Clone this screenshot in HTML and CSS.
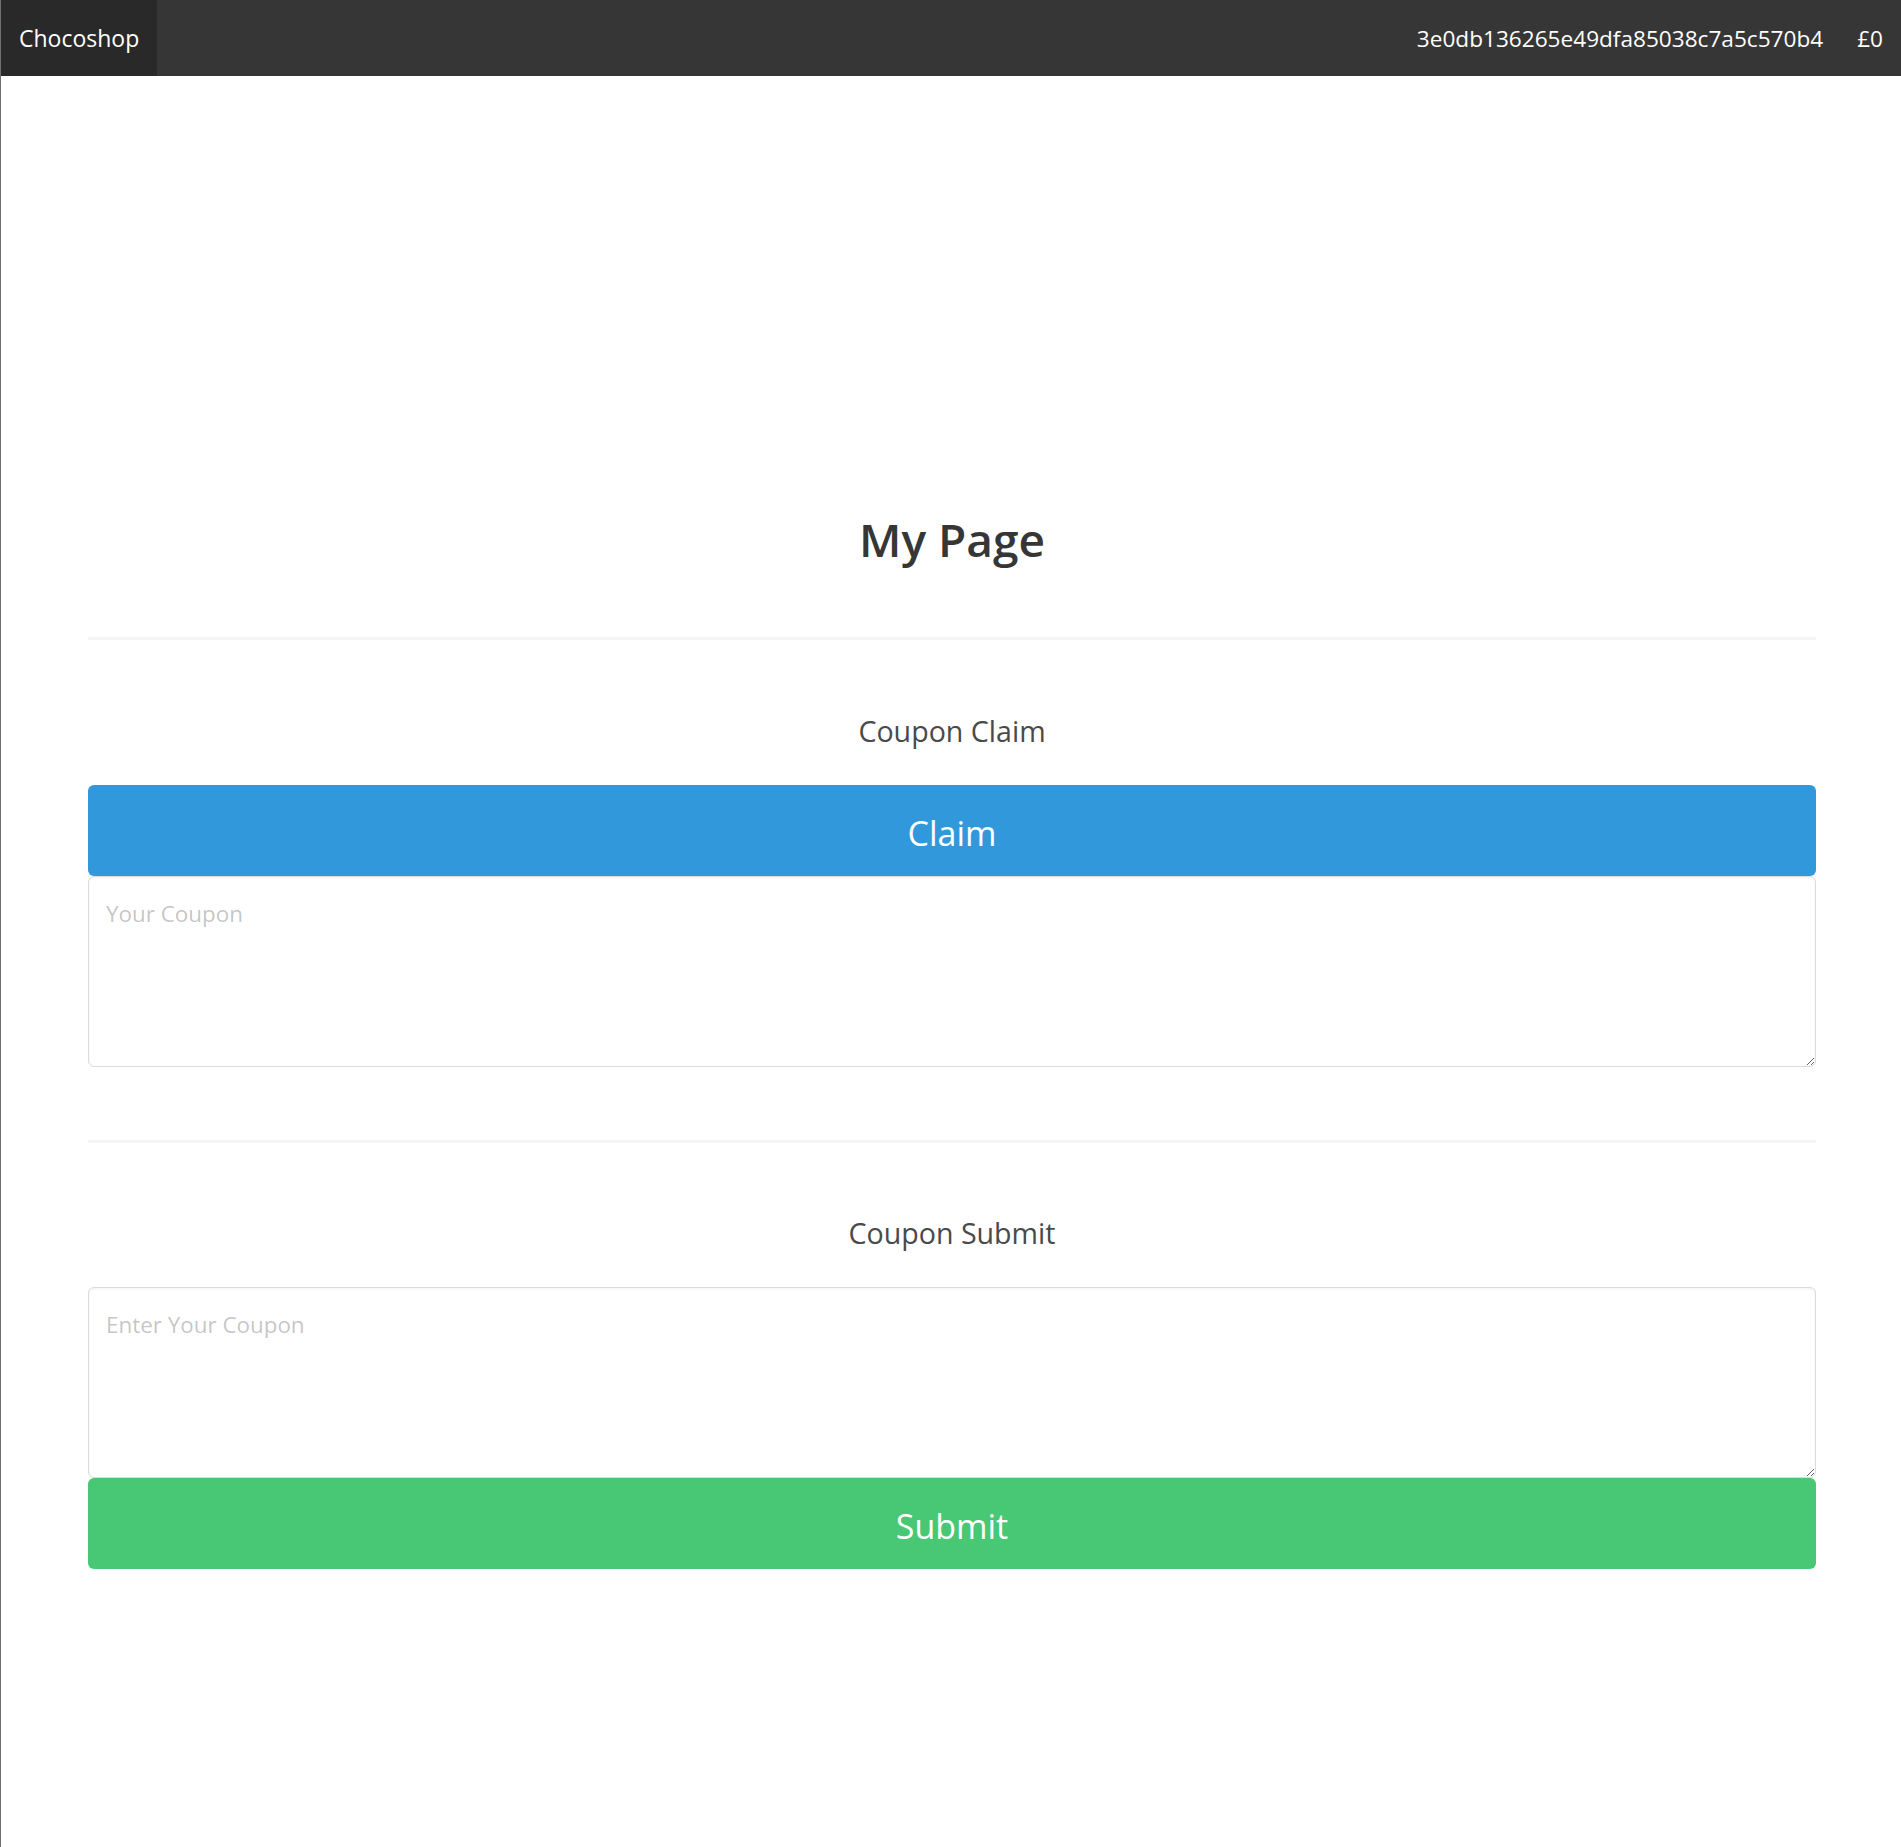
FILE: index.html
```
<!DOCTYPE html>
<html>
<head>
    <title>Chocoshop - My Page</title>
    <link rel="stylesheet" href="styles.css">
</head>
<body>
    <nav class="navbar">
        <a class="navbar-brand" href="#">Chocoshop</a>
        <div class="navbar-end">
            <span class="navbar-item">3e0db136265e49dfa85038c7a5c570b4</span>
            <span class="navbar-item">£0</span>
        </div>
    </nav>

    <section class="section">
        <h1 class="title">My Page</h1>
        <hr>

        <h2 class="subtitle">Coupon Claim</h2>
        <button class="button info">Claim</button>
        <textarea class="textarea" placeholder="Your Coupon"></textarea>

        <hr class="gap">

        <h2 class="subtitle">Coupon Submit</h2>
        <textarea class="textarea" placeholder="Enter Your Coupon"></textarea>
        <button class="button success">Submit</button>
    </section>
</body>
</html>
```

FILE: styles.css
```
html { border-left: 1px solid #707070; min-height: 100%; box-sizing: border-box; }
body { margin: 0; font-family: "Open Sans", "Noto Sans", sans-serif; color: #4a4a4a; background: #fff; }

.navbar { display: flex; align-items: stretch; height: 76px; background: #363636; }
.navbar-brand { display: flex; align-items: center; padding: 0 18px; background: #292929; color: #fff; font-size: 23px; text-decoration: none; }
.navbar-end { display: flex; align-items: stretch; margin-left: auto; padding-right: 1px; }
.navbar-item { display: flex; align-items: center; padding: 0 17px; color: #fff; font-size: 22.6px; }

.section { padding: 436px 85px 200px 87px; }
.title { margin: 0 0 71px; font-size: 46px; line-height: 54px; font-weight: 600; color: #363636; text-align: center; }
hr { height: 3px; margin: 0; border: none; background: #f5f5f5; }
hr.gap { margin-top: 73px; }
.subtitle { margin: 72px 0 36px; font-size: 28.6px; line-height: 37px; font-weight: 400; color: #4a4a4a; text-align: center; }
.gap + .subtitle { margin-top: 71px; }

.button { display: block; width: 100%; height: 91px; padding: 4px 0 0; border: none; border-radius: 6px; color: #fff; font-family: inherit; font-size: 34px; cursor: pointer; }
.info { background: #3298dc; }
.success { background: #48c774; }

.textarea { display: block; box-sizing: border-box; width: 100%; height: 191px; padding: 20px 17px 17px; border: 1px solid #dbdbdb; border-radius: 6px; box-shadow: inset 0 1px 3px rgba(10, 10, 10, 0.05); font-family: inherit; font-size: 22.4px; line-height: 1.5; color: #363636; }
.textarea::placeholder { color: rgba(54, 54, 54, 0.3); }
```
